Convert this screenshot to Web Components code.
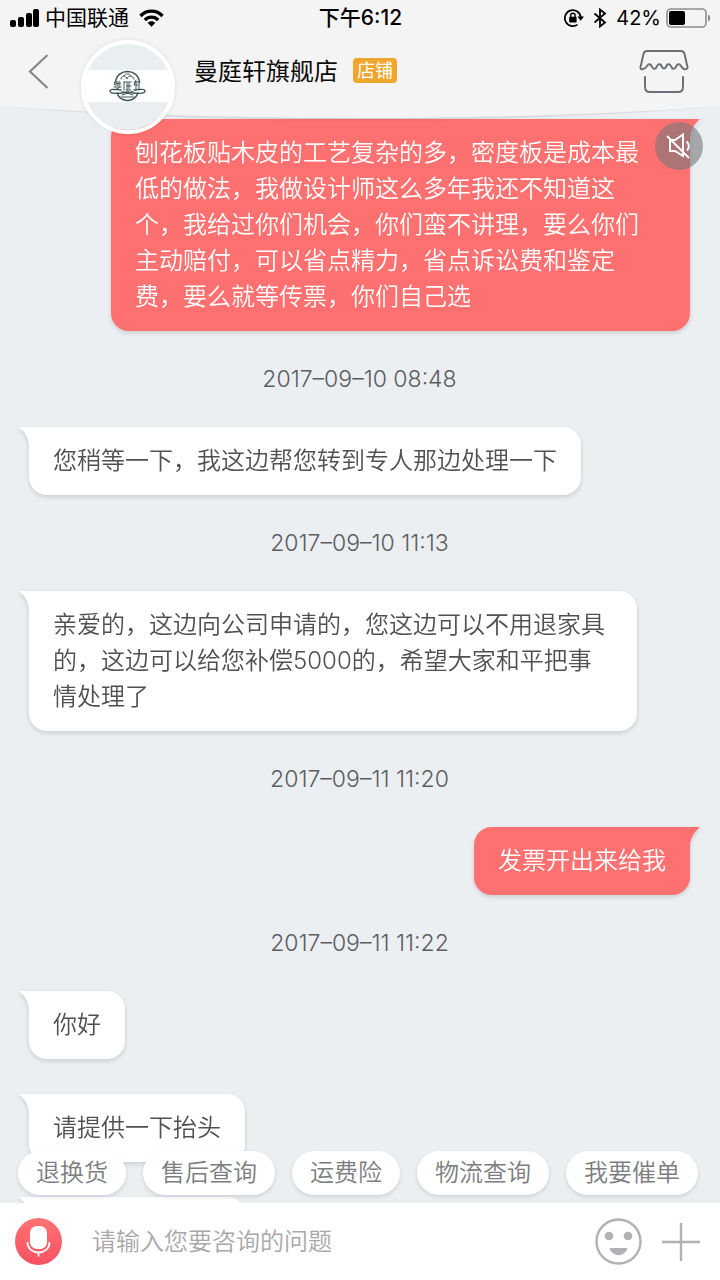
<!DOCTYPE html>
<html lang="zh-CN">
<head>
<meta charset="utf-8">
<meta name="viewport" content="width=device-width, initial-scale=1">
<title>曼庭轩旗舰店</title>
<style>
    :root
    {
        --light: #ffffff;
        --page: #ebeff2;
        --head: #f4f4f5;
        --red: #ff7070;
        --dark: #505052;
        --grey: #7b7d80;
    }

    body
    {
        margin: 0;
        height: 100vh;
        display: flex;
        flex-direction: column;
        overflow: hidden;
        background-color: var(--page);
        color: var(--dark);
        font-family: Inter, "Noto Sans CJK SC", sans-serif;
        font-size: 24px;
        font-weight: 350;
    }
</style>
</head>
<body>
    <status-bar></status-bar>
    <shop-header>
        曼庭轩旗舰店
        <span slot="badge">店铺</span>
    </shop-header>

    <chat-log>
        <chat-bubble side="out" long>刨花板贴木皮的工艺复杂的多，密度板是成本最<br>低的做法，我做设计师这么多年我还不知道这<br>个，我给过你们机会，你们蛮不讲理，要么你们<br>主动赔付，可以省点精力，省点诉讼费和鉴定<br>费，要么就等传票，你们自己选</chat-bubble>
        <chat-time>2017–09–10 08:48</chat-time>
        <chat-bubble>您稍等一下，我这边帮您转到专人那边处理一下</chat-bubble>
        <chat-time>2017–09–10 11:13</chat-time>
        <chat-bubble>亲爱的，这边向公司申请的，您这边可以不用退家具的，这边可以给您补偿5000的，希望大家和平把事情处理了</chat-bubble>
        <chat-time>2017–09–11 11:20</chat-time>
        <chat-bubble side="out">发票开出来给我</chat-bubble>
        <chat-time>2017–09–11 11:22</chat-time>
        <chat-bubble>你好</chat-bubble>
        <chat-bubble>请提供一下抬头</chat-bubble>
        <chat-bubble empty></chat-bubble>

        <quick-replies slot="over">
            <quick-reply>退换货</quick-reply>
            <quick-reply>售后查询</quick-reply>
            <quick-reply>运费险</quick-reply>
            <quick-reply>物流查询</quick-reply>
            <quick-reply>我要催单</quick-reply>
        </quick-replies>
    </chat-log>

    <chat-composer></chat-composer>

<script>
// Attach an open shadow root filled with the given markup
function render(element, markup) {
    const template = document.createElement('template');
    template.innerHTML = markup;
    element.attachShadow({ mode: 'open' }).appendChild(template.content.cloneNode(true));
}


// STATUS BAR
class StatusBar extends HTMLElement {
    constructor() {
        super();
        render(this, `
        <style>
        :host
        {
            display: grid;
            grid-template-columns: 1fr auto 1fr;
            align-items: center;
            flex: none;
            height: 36px;
            padding: 0 9px 0 10px;
            background-color: var(--head);
            color: #000;
            font-size: 21px;
            font-weight: 400;
            line-height: 24px;
            position: relative;
            z-index: 2;
        }

        div
        {
            display: flex;
            align-items: center;
        }

        svg
        {
            display: block;
        }

        .left
        {
            gap: 6px;
        }

        .left svg + span
        {
            margin-right: 4px;
        }

        .time
        {
            font-weight: 500;
        }

        .right
        {
            justify-content: flex-end;
            gap: 9px;
            font-size: 20px;
        }

        .charge
        {
            gap: 5px;
        }
        </style>

        <div class="left">
            <svg width="29" height="18" viewBox="0 0 29 18">
                <rect x="0" y="11" width="6" height="7" rx="2"/>
                <rect x="8" y="8" width="6" height="10" rx="2"/>
                <rect x="16" y="4" width="6" height="14" rx="2"/>
                <rect x="23" y="0" width="6" height="18" rx="2"/>
            </svg>
            <span>中国联通</span>
            <svg width="25" height="18" viewBox="0 0 25 18" fill="none" stroke="#000" stroke-width="3.4">
                <path d="M1.5 7 C7.5 .5 17.5 .5 23.5 7"/>
                <path d="M5.8 11 C9.5 7.2 15.5 7.2 19.2 11"/>
                <path d="M8.6 13.8 C10.8 11.6 14.2 11.6 16.4 13.8 L12.5 17.8 Z" fill="#000" stroke="none"/>
            </svg>
        </div>
        <span class="time">下午6:12</span>
        <div class="right">
            <svg width="20" height="18" viewBox="0 0 20 18">
                <path d="M13.5 15.6 A8 8 0 1 1 16.8 8.2" fill="none" stroke="#000" stroke-width="1.7"/>
                <path d="M13.3 7.6 H20 L16.7 11.8 Z"/>
                <rect x="5.2" y="7.8" width="7.4" height="5.8" rx=".8"/>
                <path d="M6.7 8 V6.4 A2.2 2.2 0 0 1 11.1 6.4 V8" fill="none" stroke="#000" stroke-width="1.4"/>
            </svg>
            <svg width="14" height="20" viewBox="0 0 14 20" fill="none" stroke="#000" stroke-width="1.8">
                <path d="M1.5 5.5 L12 14.5 L7 18.5 V1.5 L12 5.5 L1.5 14.5"/>
            </svg>
            <div class="charge">
                <span>42%</span>
                <svg width="45" height="20" viewBox="0 0 45 20">
                    <rect x="1" y="1" width="39" height="18" rx="4" fill="none" stroke="#8b8d8f" stroke-width="1.6"/>
                    <rect x="3" y="3" width="16" height="14" rx="2"/>
                    <path d="M42 6.5 C45 7.5 45 12.5 42 13.5 Z" fill="#8b8d8f"/>
                </svg>
            </div>
        </div>
        `);
    }
}


// SHOP HEADER - the bottom edge bends down over the chat
class ShopHeader extends HTMLElement {
    constructor() {
        super();
        render(this, `
        <style>
        :host
        {
            display: flex;
            align-items: center;
            flex: none;
            height: 70px;
            padding: 0 31px 0 27px;
            background-color: var(--head);
            color: #0c0c0c;
            font-weight: 400;
            position: relative;
            z-index: 1;
        }

        .curve
        {
            position: absolute;
            top: 100%;
            left: 0;
            width: 100%;
            height: 18px;
        }

        button, a
        {
            display: block;
            padding: 0;
            border: none;
            background: none;
        }

        svg
        {
            display: block;
        }

        .avatar
        {
            align-self: flex-start;
            flex: none;
            box-sizing: border-box;
            width: 94px;
            height: 94px;
            margin: 4px 19px 0 32px;
            border: 4px solid var(--light);
            border-radius: 50%;
            overflow: hidden;
            box-shadow: 0 0 4px rgba(0, 0, 0, 0.1);
            position: relative;
        }

        h1
        {
            margin: 0;
            padding-bottom: 4px;
            font-size: 24px;
            font-weight: 400;
        }

        .badge
        {
            margin: 0 0 2px 15px;
            padding: 0 4px;
            border-radius: 4px;
            background-color: #f0a52c;
            color: var(--light);
            font-size: 18px;
            line-height: 25px;
        }

        .shop
        {
            margin-left: auto;
        }
        </style>

        <svg class="curve" viewBox="0 0 720 18" preserveAspectRatio="none">
            <path d="M0 0 C200 20 520 20 720 0 Z" fill="#000" fill-opacity=".03"/>
            <path d="M0 0 C200 18 520 18 720 0 Z" fill="#000" fill-opacity=".06"/>
            <path d="M0 0 C200 16 520 16 720 0 Z" fill="#f4f4f5"/>
        </svg>
        <button aria-label="返回">
            <svg width="22" height="36" viewBox="0 0 22 36" fill="none" stroke="#85878a" stroke-width="2.2"><path d="M20.5 2 L3 18.5 L20.5 35"/></svg>
        </button>
        <div class="avatar">
            <svg width="86" height="86" viewBox="0 0 86 86">
                <rect width="86" height="86" fill="#e9eef1"/>
                <rect y="26" width="86" height="32" fill="#fff"/>
                <g fill="none" stroke="#3c5455" stroke-width="1.5" stroke-linecap="round">
                    <path d="M30.5 38 C32 24 53 24 54.5 38"/>
                    <path d="M32 49 C36 59 49 59 53 49" />
                    <path d="M36 35 C36 31 41 31 42 35 C43 31 48 31 49 35 M39 32 C40 29 45 29 46 32" stroke-width="1"/>
                    <path d="M30 38 H35 V41 H30 Z M29 43 H36 M30 46 L35 43 M31 39.5 H34" stroke-width="1"/>
                    <path d="M39 38 H46 M39 38 V46 M42 39 V46 M42 42 H46 M44 39 V45 M41 46 H46" stroke-width="1"/>
                    <path d="M49 38 H54 M51 36 L49 41 H53 M51 38 V46 M54 38 V46" stroke-width="1"/>
                    <path d="M36 46 C30 45 25 45 25 47 C25 50 34 50 42.5 48 C51 50 60 50 60 47 C60 45 55 45 49 46" stroke-width="1.3"/>
                    <path d="M37 47.5 L48 51 M48 47.5 L37 51 M36 53 H49" stroke-width="1"/>
                </g>
            </svg>
        </div>
        <h1><slot></slot></h1>
        <span class="badge"><slot name="badge"></slot></span>
        <a class="shop" href="#shop" aria-label="进入店铺">
            <svg width="50" height="44" viewBox="0 0 50 44" fill="none" stroke="#6e7174" stroke-width="2" stroke-linejoin="round" stroke-linecap="round">
                <path d="M8 2 H42 Q45 2 45.5 5 L48.5 18 Q48.5 21 45 20 Q43 19 42 17 C40 14 38 15 37 18 C35 21 33 20 32 17 C30 14 28 15 27 18 Q25 21 23 18 C22 15 20 14 18 17 C17 20 15 21 13 18 C12 15 10 14 8 17 Q6 20 4 20 Q1 21 1.5 18 L4.5 5 Q5 2 8 2 Z"/>
                <path d="M6 28 V38 Q6 43 11 43 H39 Q44 43 44 38 V28"/>
            </svg>
        </a>
        `);
    }
}


// CHAT LOG
class ChatLog extends HTMLElement {
    constructor() {
        super();
        render(this, `
        <style>
        :host
        {
            display: block;
            flex: 1;
            min-height: 0;
            overflow: hidden;
            position: relative;
        }

        .list
        {
            display: flex;
            flex-direction: column;
            gap: 35px;
            padding: 13px 30px 0 29px;
        }

        /* mute toggle floating over the messages */
        .mute
        {
            display: flex;
            align-items: center;
            justify-content: center;
            position: absolute;
            top: 16px;
            right: 17px;
            width: 48px;
            height: 48px;
            padding: 0;
            border: none;
            border-radius: 50%;
            background-color: rgba(118, 118, 122, 0.6);
        }
        </style>

        <div class="list"><slot></slot></div>
        <slot name="over"></slot>
        <button class="mute" aria-label="静音">
            <svg width="26" height="26" viewBox="0 0 26 26" fill="none" stroke="#fff" stroke-width="2">
                <path d="M4 7 H9 L17 1.5 V23 L9 18 H4 Z"/>
                <path d="M1 3 L23 25"/>
                <path d="M20.5 8.5 C23.5 11 23.5 15 21 17.5"/>
            </svg>
        </button>
        `);
    }
}


// CHAT BUBBLE - side="out" for the buyer's own messages
class ChatBubble extends HTMLElement {
    constructor() {
        super();
        render(this, `
        <style>
        :host
        {
            display: block;
            flex: none;
            align-self: flex-start;
            box-sizing: border-box;
            max-width: min(608px, 100%);
            min-height: 68px;
            padding: 16px 24px;
            border-radius: 0 18px 18px 18px;
            background-color: var(--light);
            line-height: 36px;
            position: relative;
            filter: drop-shadow(0 2px 2px rgba(0, 0, 0, 0.14));
        }

        :host([side="out"])
        {
            align-self: flex-end;
            max-width: min(579px, 100%);
            border-radius: 18px 0 18px 18px;
            background-color: var(--red);
            color: var(--light);
        }

        :host([long])
        {
            width: 100%;
        }

        :host([empty])
        {
            min-width: 216px;
        }

        svg
        {
            position: absolute;
            top: 0;
            left: -10px;
            fill: var(--light);
        }

        :host([side="out"]) svg
        {
            left: auto;
            right: -10px;
            transform: scaleX(-1);
            fill: var(--red);
        }
        </style>

        <svg width="12" height="20" viewBox="0 0 12 20"><path d="M0 0 H12 V20 H10 C10 11 6 5 0 0 Z"/></svg>
        <slot></slot>
        `);
    }
}


// CHAT TIME
class ChatTime extends HTMLElement {
    constructor() {
        super();
        render(this, `
        <style>
        :host
        {
            display: block;
            flex: none;
            text-align: center;
            font-size: 23px;
            line-height: 26px;
            color: #5c5d5f;
        }
        </style>

        <slot></slot>
        `);
    }
}


// QUICK REPLIES - row of pills over the end of the chat
class QuickReplies extends HTMLElement {
    constructor() {
        super();
        render(this, `
        <style>
        :host
        {
            display: flex;
            gap: 17px;
            position: absolute;
            left: 18px;
            right: 0;
            bottom: 8px;
        }
        </style>

        <slot></slot>
        `);
    }
}

class QuickReply extends HTMLElement {
    constructor() {
        super();
        render(this, `
        <style>
        :host
        {
            display: block;
            flex: none;
        }

        button
        {
            display: block;
            height: 44px;
            padding: 0 18px;
            border: none;
            border-radius: 22px;
            background-color: var(--light);
            box-shadow: 0 2px 4px rgba(0, 0, 0, 0.12);
            color: var(--grey);
            font: inherit;
            line-height: 44px;
        }
        </style>

        <button><slot></slot></button>
        `);
    }
}


// COMPOSER
class ChatComposer extends HTMLElement {
    constructor() {
        super();
        render(this, `
        <style>
        :host
        {
            display: flex;
            align-items: center;
            flex: none;
            height: 77px;
            padding: 0 20px 0 15px;
            background-color: var(--light);
            position: relative;
        }

        button
        {
            display: block;
            flex: none;
            padding: 0;
            border: none;
            background: none;
        }

        svg
        {
            display: block;
        }

        input
        {
            flex: 1;
            min-width: 0;
            margin: 0 20px 0 30px;
            padding: 0;
            border: none;
            outline: none;
            background: none;
            color: var(--dark);
            font: inherit;
        }

        input::placeholder
        {
            color: #a8a8aa;
            opacity: 1;
        }

        .more
        {
            margin-left: 20px;
        }
        </style>

        <button aria-label="语音">
            <svg width="47" height="47" viewBox="0 0 47 47">
                <defs><linearGradient id="mic" x1="0" y1="0" x2="0" y2="1"><stop offset="0" stop-color="#ff7373"/><stop offset="1" stop-color="#f95062"/></linearGradient></defs>
                <circle cx="23.5" cy="23.5" r="23.5" fill="url(#mic)"/>
                <rect x="15" y="8" width="17" height="23" rx="7" fill="#fff"/>
                <path d="M12.500 24 C12.500 38 34.500 38 34.500 24 M23.5 34.500 V38.500" fill="none" stroke="#fff" stroke-width="1.8"/>
            </svg>
        </button>
        <input type="text" aria-label="咨询内容" placeholder="请输入您要咨询的问题">
        <button aria-label="表情">
            <svg width="47" height="47" viewBox="0 0 47 47" fill="#b1b1b6">
                <circle cx="23.5" cy="23.5" r="22" fill="none" stroke="#b1b1b6" stroke-width="2.4"/>
                <circle cx="14" cy="18" r="4.3"/>
                <circle cx="33" cy="18" r="4.3"/>
                <path d="M14.500 30 H32.500 C30 39.500 17 39.500 14.500 30 Z"/>
            </svg>
        </button>
        <button class="more" aria-label="更多">
            <svg width="38" height="38" viewBox="0 0 38 38" fill="none" stroke="#b1b1b6" stroke-width="2.4"><path d="M19 0 V38 M0 19 H38"/></svg>
        </button>
        `);
    }
}

customElements.define('status-bar', StatusBar);
customElements.define('shop-header', ShopHeader);
customElements.define('chat-log', ChatLog);
customElements.define('chat-bubble', ChatBubble);
customElements.define('chat-time', ChatTime);
customElements.define('quick-replies', QuickReplies);
customElements.define('quick-reply', QuickReply);
customElements.define('chat-composer', ChatComposer);
</script>
</body>
</html>
